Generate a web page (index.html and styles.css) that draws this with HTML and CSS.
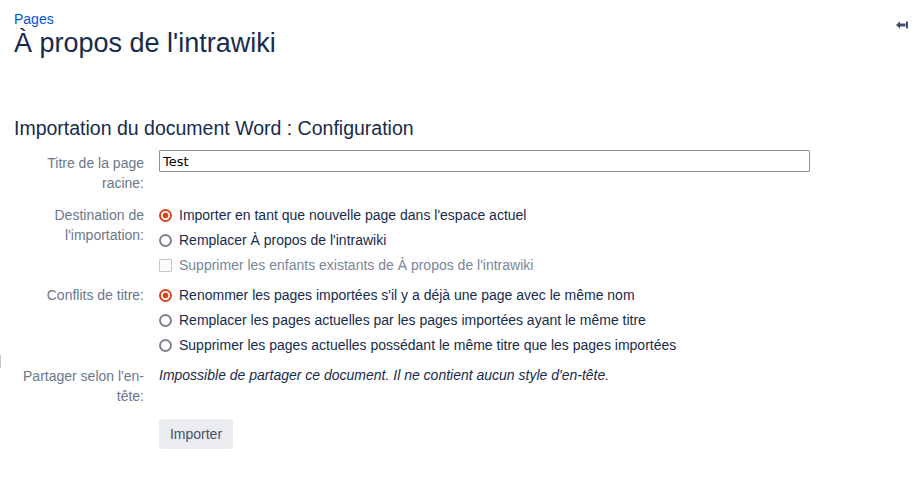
FILE: index.html
```html
<!DOCTYPE html>
<html lang="fr">
<head>
<meta charset="utf-8">
<title>Importation du document Word</title>
<link rel="stylesheet" href="styles.css">
</head>
<body>
<div class="edge-mark"></div>
<div class="page">
  <header class="page-header">
    <div class="titles">
      <a class="crumb" href="#">Pages</a>
      <h1 class="page-title">À propos de l'intrawiki</h1>
    </div>
    <button class="collapse-btn" aria-label="Réduire">
      <svg width="12" height="10" viewBox="0 0 12 10"><path d="M0 5 L4 1.2 L4 3.6 L9.6 3.6 L9.6 6.4 L4 6.4 L4 8.8 Z" fill="#42526e"/><rect x="10" y="1.5" width="2" height="7" fill="#42526e"/></svg>
    </button>
  </header>

  <h2 class="section-title">Importation du document Word : Configuration</h2>

  <form class="form">
    <div class="field field-first">
      <label class="field-label">Titre de la page racine:</label>
      <div class="field-control">
        <input class="text-input" type="text" value="Test">
      </div>
    </div>

    <div class="field field-choices">
      <div class="field-label">Destination de l'importation:</div>
      <div class="field-control options">
        <div class="option"><span class="radio checked"></span><span>Importer en tant que nouvelle page dans l'espace actuel</span></div>
        <div class="option"><span class="radio"></span><span>Remplacer À propos de l'intrawiki</span></div>
        <div class="option disabled"><span class="checkbox"></span><span>Supprimer les enfants existants de À propos de l'intrawiki</span></div>
      </div>
    </div>

    <div class="field field-choices field-tight">
      <div class="field-label">Conflits de titre:</div>
      <div class="field-control options">
        <div class="option"><span class="radio checked"></span><span>Renommer les pages importées s'il y a déjà une page avec le même nom</span></div>
        <div class="option"><span class="radio"></span><span>Remplacer les pages actuelles par les pages importées ayant le même titre</span></div>
        <div class="option"><span class="radio"></span><span>Supprimer les pages actuelles possédant le même titre que les pages importées</span></div>
      </div>
    </div>

    <div class="field field-split">
      <div class="field-label">Partager selon l'en-tête:</div>
      <div class="field-control">
        <p class="note">Impossible de partager ce document. Il ne contient aucun style d'en-tête.</p>
      </div>
    </div>

    <div class="actions">
      <button type="button" class="btn">Importer</button>
    </div>
  </form>
</div>
</body>
</html>
```

FILE: styles.css
```css
html, body {
  margin: 0;
  padding: 0;
  background: #ffffff;
}

body {
  font-family: "Liberation Sans", Arial, sans-serif;
  font-size: 14px;
  color: #172b4d;
  position: relative;
  min-height: 497px;
}

.edge-mark {
  position: absolute;
  left: 0;
  top: 355px;
  width: 1px;
  height: 13px;
  background: #c1c7d0;
}

.page {
  padding: 11px 0 0 14px;
}

.page-header {
  display: flex;
  justify-content: space-between;
  align-items: flex-start;
}

.titles {
  display: flex;
  flex-direction: column;
}

.crumb {
  color: #0052cc;
  text-decoration: none;
  font-size: 14px;
  line-height: 16px;
}

.page-title {
  margin: 0;
  font-size: 27px;
  font-weight: normal;
  line-height: 32px;
  color: #172b4d;
}

.collapse-btn {
  border: 0;
  background: transparent;
  padding: 0;
  margin: 9px 5px 0 0;
  width: 12px;
  height: 10px;
  display: flex;
}

.section-title {
  margin: 57px 0 0 0;
  font-size: 19.5px;
  font-weight: normal;
  line-height: 24px;
  color: #172b4d;
}

.form {
  display: flex;
  flex-direction: column;
  margin-top: 10px;
}

.field {
  display: grid;
  grid-template-columns: 130px 1fr;
  column-gap: 15px;
  margin-top: 9px;
}

.field-first {
  margin-top: 0;
}

.field-tight {
  margin-top: 7px;
}

.field-label {
  text-align: right;
  color: #6b778c;
  line-height: 20px;
  padding-top: 3px;
}

.field-split .field-label {
  padding-top: 2px;
}

.field-split .note {
  padding-top: 1px;
}

.field-choices .options {
  padding-top: 3px;
}

.field-control {
  min-width: 0;
}

.text-input {
  box-sizing: border-box;
  width: 651px;
  height: 22px;
  border: 1px solid #8b8e9c;
  border-radius: 1px;
  padding: 1px 3px 0 3px;
  font-family: "DejaVu Sans", Verdana, sans-serif;
  font-size: 13px;
  color: #000000;
  background: #ffffff;
  outline: none;
}

.options {
  display: flex;
  flex-direction: column;
  gap: 5px;
}

.option {
  display: flex;
  align-items: center;
  gap: 7px;
  height: 20px;
  line-height: 20px;
  color: #172b4d;
}

.option.disabled {
  color: #7a869a;
}

.radio {
  box-sizing: border-box;
  width: 13px;
  height: 13px;
  border-radius: 50%;
  border: 2px solid #7f8290;
  flex: none;
}

.radio.checked {
  border: 2px solid #e0461e;
  background: radial-gradient(circle, #e0461e 0 2.6px, #ffffff 3.2px);
}

.checkbox {
  box-sizing: border-box;
  width: 13px;
  height: 13px;
  border: 1px solid #c1c7d0;
  border-radius: 1px;
  flex: none;
  background: #fafbfc;
}

.note {
  margin: 0;
  font-style: italic;
  color: #172b4d;
  line-height: 20px;
}

.actions {
  padding-left: 145px;
  margin-top: 13px;
}

.btn {
  font-family: "Liberation Sans", Arial, sans-serif;
  font-size: 14px;
  color: #42526e;
  background: #ebecf0;
  border: 0;
  border-radius: 3px;
  height: 30px;
  width: 74px;
  padding: 0;
}
```
